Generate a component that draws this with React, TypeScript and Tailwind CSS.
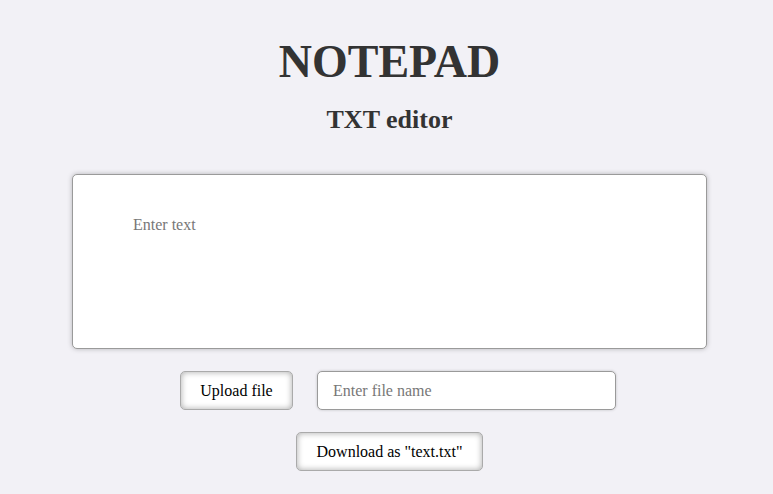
export default function App() {
  return (
    <div
      className="min-h-screen w-full bg-[#f2f1f6] pl-[6px] text-[#333]"
      style={{ fontFamily: '"Liberation Serif", "Times New Roman", serif' }}
    >
      <div className="flex flex-col items-center pt-[39px]">
        <h1 className="text-[46px] font-bold leading-none">NOTEPAD</h1>
        <h2 className="mt-[22px] text-[26px] font-bold leading-none">TXT editor</h2>

        <textarea
          placeholder="Enter text"
          className="mt-[41px] h-[175px] w-[635px] resize-none rounded-[5px] border border-[#9a9a9a] bg-white pl-[60px] pr-[20px] pt-[40px] text-[16px] leading-[20px] text-black shadow-[0_0_5px_rgba(0,0,0,0.25)] outline-none placeholder:text-[#777]"
        />

        <div className="mt-[22px] flex items-center gap-[24px] pl-[17px]">
          <button className="h-[39px] w-[113px] rounded-[5px] border border-[#aaa] bg-white text-[16px] text-black shadow-[inset_0_0_6px_rgba(0,0,0,0.35)]">
            Upload file
          </button>
          <input
            type="text"
            placeholder="Enter file name"
            className="h-[39px] w-[299px] rounded-[5px] border border-[#9a9a9a] bg-white px-[15px] text-[16px] text-black shadow-[0_0_3px_rgba(0,0,0,0.2)] outline-none placeholder:text-[#777]"
          />
        </div>

        <button className="mt-[22px] h-[39px] w-[187px] rounded-[5px] border border-[#aaa] bg-white text-[16px] text-black shadow-[inset_0_0_6px_rgba(0,0,0,0.35)]">
          Download as "text.txt"
        </button>
      </div>
    </div>
  );
}
